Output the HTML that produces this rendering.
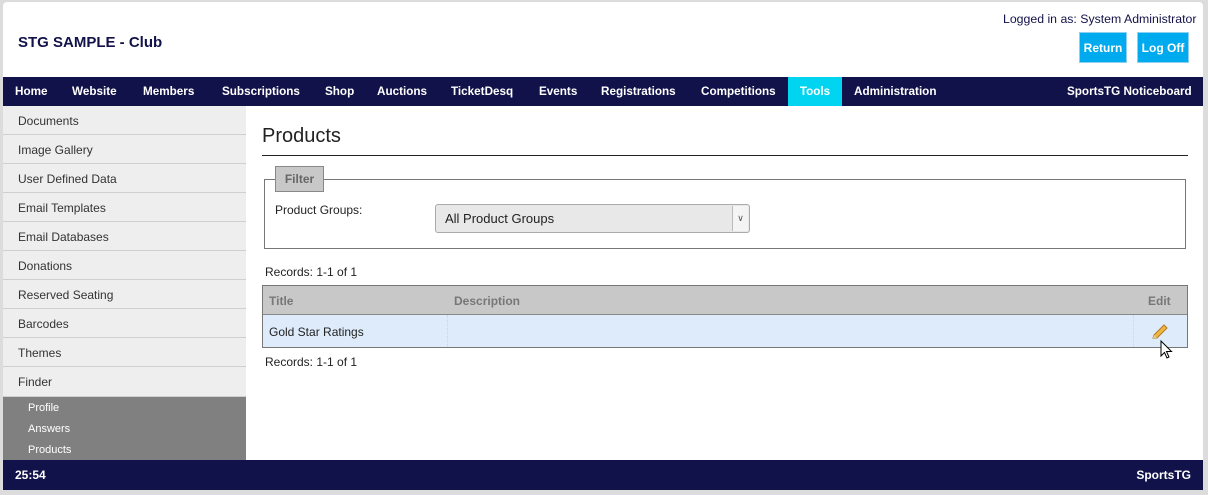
<!DOCTYPE html>
<html><head><meta charset="utf-8"><style>
*{margin:0;padding:0;box-sizing:border-box}
body{width:1208px;height:495px;background:#dcdcdc;font-family:"Liberation Sans",Arial,sans-serif;position:relative;overflow:hidden}
.a{position:absolute}
#page{left:3px;top:2px;width:1200px;height:488px;background:#fff;border-radius:4px 4px 0 0}
#nav{left:3px;top:77px;width:1200px;height:29px;background:#12124a}
.n{position:absolute;top:0;height:29px;line-height:30px;color:#fff;font-weight:bold;font-size:11.7px}
.btn{position:absolute;background:#00aaee;color:#fff;font-weight:bold;font-size:12px;text-align:center;line-height:30px;height:31px;border:1px solid #8fd0ee}
.sb{position:absolute;left:3px;width:243px;height:29px;background:#eeeeee;border-bottom:1px solid #cfcfcf;font-size:12px;color:#333;padding-left:15px;line-height:30px}
.sub{position:absolute;left:28px;color:#fff;font-size:11px}
#foot{left:3px;top:460px;width:1200px;height:30px;background:#12124a;color:#fff;font-weight:bold;font-size:12px;line-height:30px}
</style></head><body>
<div id="page" class="a"></div>
<div class="a" style="left:18px;top:34px;font-size:15px;font-weight:bold;color:#12124a">STG SAMPLE - Club</div>
<div class="a" style="left:1003px;top:12px;font-size:12.3px;color:#12124a">Logged in as: System Administrator</div>
<div class="btn" style="left:1079px;top:32px;width:48px">Return</div>
<div class="btn" style="left:1137px;top:32px;width:52px">Log Off</div>
<div id="nav" class="a">
<span class="n" style="left:12px">Home</span>
<span class="n" style="left:69px">Website</span>
<span class="n" style="left:140px">Members</span>
<span class="n" style="left:219px">Subscriptions</span>
<span class="n" style="left:322px">Shop</span>
<span class="n" style="left:374px">Auctions</span>
<span class="n" style="left:448px">TicketDesq</span>
<span class="n" style="left:536px">Events</span>
<span class="n" style="left:598px">Registrations</span>
<span class="n" style="left:698px">Competitions</span>
<span class="n" style="left:785px;width:54px;background:#00d4f0;text-align:center">Tools</span>
<span class="n" style="left:851px">Administration</span>
<span class="n" style="left:1064px">SportsTG Noticeboard</span>
</div>
<div class="sb" style="top:106px">Documents</div>
<div class="sb" style="top:135px">Image Gallery</div>
<div class="sb" style="top:164px">User Defined Data</div>
<div class="sb" style="top:193px">Email Templates</div>
<div class="sb" style="top:222px">Email Databases</div>
<div class="sb" style="top:251px">Donations</div>
<div class="sb" style="top:280px">Reserved Seating</div>
<div class="sb" style="top:309px">Barcodes</div>
<div class="sb" style="top:338px">Themes</div>
<div class="sb" style="top:367px;height:30px">Finder</div>
<div class="a" style="left:3px;top:397px;width:243px;height:63px;background:#808080"></div>
<div class="sub" style="top:402px">Profile</div>
<div class="sub" style="top:423px">Answers</div>
<div class="sub" style="top:444px">Products</div>
<div class="a" style="left:262px;top:125px;font-size:20px;color:#222">Products</div>
<div class="a" style="left:262px;top:155px;width:926px;height:1px;background:#222"></div>
<div class="a" style="left:264px;top:179px;width:922px;height:70px;border:1px solid #777"></div>
<div class="a" style="left:275px;top:166px;width:49px;height:26px;background:#c8c8c8;border:1px solid #888;color:#666;font-weight:bold;font-size:12px;text-align:center;line-height:24px">Filter</div>
<div class="a" style="left:275px;top:203px;font-size:12px;color:#222">Product Groups:</div>
<div class="a" style="left:435px;top:204px;width:315px;height:29px;background:#e8e8e8;border:1px solid #aaa;border-radius:3px;font-size:13px;color:#222;line-height:27px;padding-left:9px">All Product Groups</div>
<div class="a" style="left:732px;top:206px;width:16px;height:25px;background:#f4f4f4;border-left:1px solid #bbb;font-size:9px;color:#555;text-align:center;line-height:25px">&#8744;</div>
<div class="a" style="left:265px;top:265px;font-size:12px;color:#222">Records: 1-1 of 1</div>
<div class="a" style="left:262px;top:285px;width:926px;height:63px;border:1px solid #777"></div>
<div class="a" style="left:263px;top:286px;width:924px;height:29px;background:#c8c8c8;border-bottom:1px solid #888"></div>
<div class="a" style="left:269px;top:294px;font-size:12px;font-weight:bold;color:#777">Title</div>
<div class="a" style="left:454px;top:294px;font-size:12px;font-weight:bold;color:#777">Description</div>
<div class="a" style="left:1148px;top:294px;font-size:12px;font-weight:bold;color:#777">Edit</div>
<div class="a" style="left:263px;top:315px;width:924px;height:32px;background:#ddebfb"></div>
<div class="a" style="left:447px;top:315px;width:1px;height:32px;border-left:1px dotted #c8d4e0"></div>
<div class="a" style="left:1133px;top:315px;width:1px;height:32px;border-left:1px dotted #c8d4e0"></div>
<div class="a" style="left:269px;top:325px;font-size:12px;color:#222">Gold Star Ratings</div>
<svg class="a" style="left:1150px;top:322px" width="20" height="20" viewBox="0 0 20 20"><path d="M3 16 L4 13 L14 3 L17 6 L7 16 Z" fill="#f2b640" stroke="#b07a20" stroke-width="1"/><path d="M3 16 L4 13 L7 16 Z" fill="#e8c898"/></svg>
<svg class="a" style="left:1160px;top:340px" width="14" height="20" viewBox="0 0 14 20"><path d="M1 1 L1 16 L4.5 12.5 L7 18 L9 17 L6.5 11.5 L11.5 11.5 Z" fill="#fff" stroke="#000" stroke-width="1"/></svg>
<div class="a" style="left:265px;top:355px;font-size:12px;color:#222">Records: 1-1 of 1</div>
<div id="foot" class="a"><span style="position:absolute;left:12px">25:54</span><span style="position:absolute;right:12px">SportsTG</span></div>
</body></html>
